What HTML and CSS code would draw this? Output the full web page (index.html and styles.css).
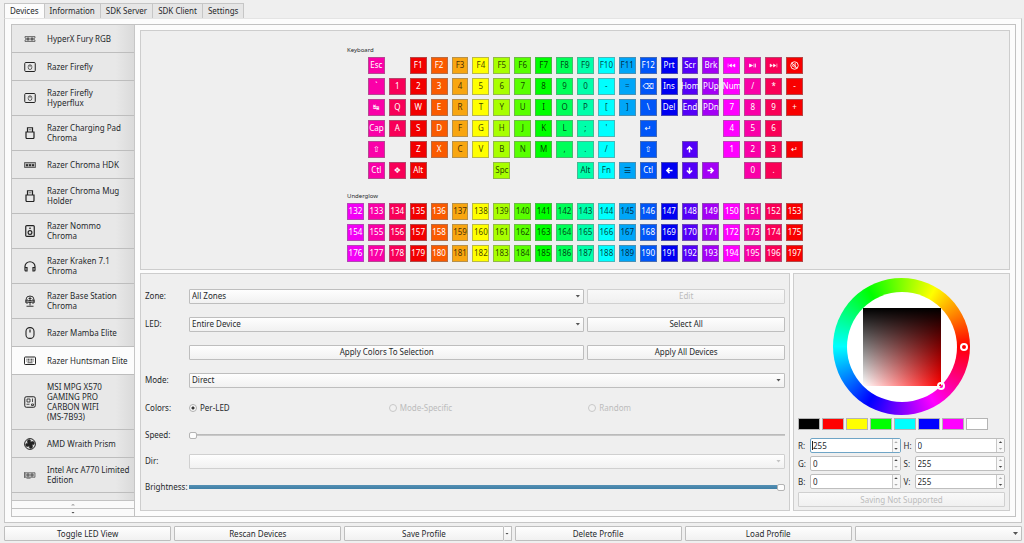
FILE: index.html
```html
<!DOCTYPE html>
<html lang="en">
<head>
<meta charset="utf-8">
<title>OpenRGB</title>
<link rel="stylesheet" href="styles.css">
</head>
<body>
<svg class="symbols" aria-hidden="true">
  <symbol id="i-dram" viewBox="0 0 24 24"><path d="M2 7h20v3a2 2 0 0 0 0 4v3H2v-3a2 2 0 0 0 0-4z" fill="#ccc" stroke="#555"/><path d="M6 10h4v4H6zM14 10h4v4h-4z" fill="#888" stroke="#444"/></symbol>
  <symbol id="i-mat" viewBox="0 0 24 24"><rect x="1.500" y="3" width="21" height="18" rx="2" stroke-width="2"/><rect x="8.500" y="7.500" width="7" height="9.500" rx="3.500" stroke-width="1.300"/><path d="M12 8v4" stroke-width="1.300"/></symbol>
  <symbol id="i-usb" viewBox="0 0 24 24"><path d="M4 10h16v11a2 2 0 0 1-2 2H6a2 2 0 0 1-2-2zM7 10V1.500h10V10" stroke-width="2.400"/><path d="M10.500 4.500v2M13.500 4.500v2" stroke-width="1.500"/></symbol>
  <symbol id="i-strip" viewBox="0 0 24 24"><path d="M1 7h22v10H1z" fill="#aaa" stroke="#444"/><path d="M5 11h2v3H5zM11 11h2v3h-2zM17 11h2v3h-2z" fill="#222"/></symbol>
  <symbol id="i-speaker" viewBox="0 0 24 24"><rect x="3.500" y="1.200" width="17" height="21.600" rx="2" stroke-width="2.400"/><circle cx="12" cy="15" r="3.800" stroke-width="2.400"/><circle cx="12" cy="6.500" r="1" stroke-width="2"/></symbol>
  <symbol id="i-headset" viewBox="0 0 24 24"><path d="M2 17v-4a10 9.500 0 0 1 20 0v4M2 15h4v7H4a2 2 0 0 1-2-2zM18 15h4v5a2 2 0 0 1-2 2h-2z" stroke-width="2.400"/></symbol>
  <symbol id="i-stand" viewBox="0 0 24 24"><path d="M4 15V9a8 7 0 0 1 16 0v6M4 10h4v6H4zM16 10h4v6h-4zM12 3v18M5 22.500h14M9 7h6M9 11h6M9 15h6" stroke-width="1.800"/></symbol>
  <symbol id="i-mouse" viewBox="0 0 24 24"><rect x="4" y="1.200" width="16" height="21.600" rx="7.500" stroke-width="2.200"/><path d="M12 5v6" stroke-width="2.400"/></symbol>
  <symbol id="i-keyboard" viewBox="0 0 24 24"><rect x="1" y="4" width="22" height="15" rx="1.500" stroke-width="2"/><path d="M5 8.500h14M5 12h14" stroke-dasharray="2 1" stroke-width="2"/><path d="M7 15.500h10"/></symbol>
  <symbol id="i-board" viewBox="0 0 24 24"><rect x="1.500" y="1.500" width="21" height="21" rx="3" stroke-width="2"/><path d="M6 6h6v6H6zM17 5v7M5 16.500h6M15 16h4v3h-4z" stroke-width="1.600"/></symbol>
  <symbol id="i-fan" viewBox="0 0 24 24"><circle cx="12" cy="12" r="10.800" stroke-width="2"/><path d="M12 12C5 11 5 4 10 3c5 0 4 5 2 9zM12 12c1-7 8-7 9-2 0 5-5 4-9 2zM12 12c7 1 7 8 2 9-5 0-4-5-2-9zM12 12c-1 7-8 7-9 2 0-5 5-4 9-2z" fill="#222" stroke-width="0.600"/></symbol>
  <symbol id="i-gpu" viewBox="0 0 24 24"><path d="M1 6v12M2 7.500h20v9H2z" fill="#ccc" stroke="#555"/><circle cx="8" cy="12" r="2.500" fill="#999" stroke="#444"/><circle cx="16" cy="12" r="2.500" fill="#999" stroke="#444"/><path d="M5 18.500h8" stroke="#555"/></symbol>
  <symbol id="k-prev" viewBox="0 0 24 24"><path d="M3 7v10M12 8v8l-6-4zM21 8v8l-6-4z" fill="#fff" stroke="#fff"/></symbol>
  <symbol id="k-play" viewBox="0 0 24 24"><path d="M4 8v8l8-4zM16 7v10M20 7v10" fill="#fff" stroke="#fff" stroke-width="2"/></symbol>
  <symbol id="k-next" viewBox="0 0 24 24"><path d="M21 7v10M12 8v8l6-4zM3 8v8l6-4z" fill="#fff" stroke="#fff"/></symbol>
  <symbol id="k-mute" viewBox="0 0 24 24"><circle cx="12" cy="12" r="10" stroke="#fff" stroke-width="2.400"/><path d="M5 5l14 14M7 10v4h3l4 4V6l-4 4z" stroke="#fff" stroke-width="2"/></symbol>
  <symbol id="k-left" viewBox="0 0 24 24"><path d="M20 12H6M12 5l-7 7 7 7" stroke="#fff" stroke-width="4"/></symbol>
  <symbol id="k-right" viewBox="0 0 24 24"><path d="M4 12h14M12 5l7 7-7 7" stroke="#fff" stroke-width="4"/></symbol>
  <symbol id="k-up" viewBox="0 0 24 24"><path d="M12 20V6M5 12l7-7 7 7" stroke="#fff" stroke-width="4"/></symbol>
  <symbol id="k-down" viewBox="0 0 24 24"><path d="M12 4v14M5 12l7 7 7-7" stroke="#fff" stroke-width="4"/></symbol>
</svg>

<nav class="tabs">
  <button class="tab tab-active">Devices</button>
  <button class="tab">Information</button>
  <button class="tab">SDK Server</button>
  <button class="tab">SDK Client</button>
  <button class="tab">Settings</button>
</nav>

<main class="page">
  <div class="frame">
    <aside class="sidebar">
      <div class="devices">
        <button class="device"><svg><use href="#i-dram"/></svg><span>HyperX Fury RGB</span></button>
        <button class="device"><svg><use href="#i-mat"/></svg><span>Razer Firefly</span></button>
        <button class="device"><svg><use href="#i-mat"/></svg><span>Razer Firefly<br>Hyperflux</span></button>
        <button class="device"><svg><use href="#i-usb"/></svg><span>Razer Charging Pad<br>Chroma</span></button>
        <button class="device"><svg><use href="#i-strip"/></svg><span>Razer Chroma HDK</span></button>
        <button class="device"><svg><use href="#i-usb"/></svg><span>Razer Chroma Mug<br>Holder</span></button>
        <button class="device"><svg><use href="#i-speaker"/></svg><span>Razer Nommo<br>Chroma</span></button>
        <button class="device"><svg><use href="#i-headset"/></svg><span>Razer Kraken 7.1<br>Chroma</span></button>
        <button class="device"><svg><use href="#i-stand"/></svg><span>Razer Base Station<br>Chroma</span></button>
        <button class="device"><svg><use href="#i-mouse"/></svg><span>Razer Mamba Elite</span></button>
        <button class="device device-active"><svg><use href="#i-keyboard"/></svg><span>Razer Huntsman Elite</span></button>
        <button class="device"><svg><use href="#i-board"/></svg><span>MSI MPG X570<br>GAMING PRO<br>CARBON WIFI<br>(MS-7B93)</span></button>
        <button class="device"><svg><use href="#i-fan"/></svg><span>AMD Wraith Prism</span></button>
        <button class="device"><svg><use href="#i-gpu"/></svg><span>Intel Arc A770 Limited<br>Edition</span></button>
      </div>
      <button class="scroll" aria-label="Scroll up" disabled><i class="arrow arrow-up"></i></button>
      <button class="scroll" aria-label="Scroll down"><i class="arrow"></i></button>
    </aside>

    <div class="content">
      <section class="panel led-view">
        <div class="zones">
          <h2 class="zone-name">Keyboard</h2>
          <div class="keys" id="keyboard"></div>
          <h2 class="zone-name zone-second">Underglow</h2>
          <div class="keys" id="underglow"></div>
        </div>
      </section>

      <div class="lower">
        <section class="panel settings">
          <div class="row">
            <label for="zone">Zone:</label>
            <div class="combo"><select id="zone"><option>All Zones</option></select></div>
            <button class="button" disabled>Edit</button>
          </div>
          <div class="row">
            <label for="led">LED:</label>
            <div class="combo"><select id="led"><option>Entire Device</option></select></div>
            <button class="button">Select All</button>
          </div>
          <div class="row">
            <span></span>
            <button class="button">Apply Colors To Selection</button>
            <button class="button">Apply All Devices</button>
          </div>
          <div class="row">
            <label for="mode">Mode:</label>
            <div class="combo wide"><select id="mode"><option>Direct</option></select></div>
          </div>
          <div class="row">
            <span>Colors:</span>
            <div class="radios wide">
              <label class="radio"><input type="radio" name="colors" checked>Per-LED</label>
              <label class="radio off"><input type="radio" name="colors" disabled>Mode-Specific</label>
              <label class="radio off"><input type="radio" name="colors" disabled>Random</label>
            </div>
          </div>
          <div class="row row-short">
            <label for="speed">Speed:</label>
            <input class="slider wide" id="speed" type="range" min="0" max="100" value="0" disabled>
          </div>
          <div class="row row-short">
            <label for="dir">Dir:</label>
            <div class="combo combo-off wide"><select id="dir" disabled></select></div>
          </div>
          <div class="row row-short">
            <label for="brightness">Brightness:</label>
            <input class="slider slider-full wide" id="brightness" type="range" min="0" max="100" value="100">
          </div>
        </section>

        <section class="panel picker">
          <div class="wheel">
            <div class="wheel-hole"><div class="square"><i class="handle handle-shade"></i></div></div>
            <i class="handle handle-hue"></i>
          </div>
          <div class="swatches">
            <button class="swatch black" aria-label="Black"></button>
            <button class="swatch red" aria-label="Red"></button>
            <button class="swatch yellow" aria-label="Yellow"></button>
            <button class="swatch green" aria-label="Green"></button>
            <button class="swatch cyan" aria-label="Cyan"></button>
            <button class="swatch blue" aria-label="Blue"></button>
            <button class="swatch magenta" aria-label="Magenta"></button>
            <button class="swatch white" aria-label="White"></button>
          </div>
          <div class="channels">
            <label for="r">R:</label>
            <div class="spin spin-focus"><input id="r" value="255"><span class="steps"><button class="dim" aria-label="Increase R"><i class="arrow arrow-up"></i></button><button aria-label="Decrease R"><i class="arrow"></i></button></span></div>
            <label for="h">H:</label>
            <div class="spin"><input id="h" value="0"><span class="steps"><button aria-label="Increase H"><i class="arrow arrow-up"></i></button><button class="dim" aria-label="Decrease H"><i class="arrow"></i></button></span></div>
            <label for="g">G:</label>
            <div class="spin"><input id="g" value="0"><span class="steps"><button aria-label="Increase G"><i class="arrow arrow-up"></i></button><button class="dim" aria-label="Decrease G"><i class="arrow"></i></button></span></div>
            <label for="s">S:</label>
            <div class="spin"><input id="s" value="255"><span class="steps"><button class="dim" aria-label="Increase S"><i class="arrow arrow-up"></i></button><button aria-label="Decrease S"><i class="arrow"></i></button></span></div>
            <label for="b">B:</label>
            <div class="spin"><input id="b" value="0"><span class="steps"><button aria-label="Increase B"><i class="arrow arrow-up"></i></button><button class="dim" aria-label="Decrease B"><i class="arrow"></i></button></span></div>
            <label for="v">V:</label>
            <div class="spin"><input id="v" value="255"><span class="steps"><button class="dim" aria-label="Increase V"><i class="arrow arrow-up"></i></button><button aria-label="Decrease V"><i class="arrow"></i></button></span></div>
          </div>
          <button class="button save" disabled>Saving Not Supported</button>
        </section>
      </div>
    </div>
  </div>
</main>

<footer class="actions">
  <button class="button">Toggle LED View</button>
  <button class="button">Rescan Devices</button>
  <div class="split">
    <button class="button">Save Profile</button>
    <button class="button split-menu" aria-label="Save options"><i class="arrow"></i></button>
  </div>
  <button class="button">Delete Profile</button>
  <button class="button">Load Profile</button>
  <div class="combo"><select aria-label="Profile"></select></div>
</footer>
<script src="keys.js"></script>
</body>
</html>
```

FILE: styles.css
```css
* { box-sizing: border-box; }

body {
  margin: 0;
  padding: 3px 2px 2px 4px;
  min-height: 100vh;
  display: flex;
  flex-direction: column;
  background: #efefef;
  color: #26292c;
  font: 8px/10px "Noto Sans", "DejaVu Sans", sans-serif;
}

button, input, select {
  margin: 0;
  padding: 0;
  color: inherit;
  font: inherit;
}

.symbols { position: absolute; width: 0; height: 0; }

svg { fill: none; stroke: #222; stroke-width: 1.5; }

.arrow {
  display: block;
  width: 4px;
  height: 2px;
  background: #444;
  clip-path: polygon(0 0, 100% 0, 50% 100%);
}
.arrow-up { clip-path: polygon(50% 0, 100% 100%, 0 100%); }
:disabled > .arrow, .dim > .arrow { background: #aaa; }

/* Tabs */
.tabs { display: flex; align-items: flex-end; }
.tab {
  height: 15px;
  padding: 0 5px;
  border: 1px solid #c6c6c6;
  border-left-width: 0;
  border-bottom: 0;
  background: #e6e6e6;
}
.tab-active { border-left-width: 1px; background: #fcfcfc; }

.page {
  flex: 1;
  display: flex;
  padding: 5px 5px 5px 6px;
  border: 1px solid #c6c6c6;
  border-top-color: #e4e4e4;
  background: #fcfcfc;
}
.frame { flex: 1; display: flex; border: 1px solid #c2c2c2; min-width: 0; }

/* Device list */
.sidebar {
  width: 123px;
  display: flex;
  flex-direction: column;
  flex: none;
}
.devices {
  flex: 1 1 0;
  display: flex;
  flex-direction: column;
  min-height: 0;
  overflow: hidden;
  border-right: 1px solid #c6c6c6;
  background: linear-gradient(to right, #e8e8e8 85%, #dadada);
}
.device {
  min-height: 28px;
  flex: none;
  display: flex;
  align-items: center;
  gap: 11px;
  padding: 7px 0 7px 12px;
  border: 0;
  border-bottom: 1px solid #bdbdbd;
  background: none;
  text-align: left;
  white-space: nowrap;
}
.device svg { width: 12px; height: 12px; flex: none; }
.device-active { background: #fcfcfc; }
.scroll {
  height: 8px;
  display: grid;
  place-items: center;
  border: 0;
  border-top: 1px solid #c2c2c2;
  border-right: 1px solid #c2c2c2;
  background: #fafafa;
}

/* Content */
.content {
  flex: 1;
  min-width: 0;
  display: flex;
  flex-direction: column;
  gap: 3px;
  padding: 5px;
}
.panel { border: 1px solid #cdcdcd; background: #efefef; }
.led-view { flex: 1; display: grid; place-items: center; padding-top: 6px; }
.zones { width: 456px; max-width: 100%; }
.zone-name { margin: 0; font-size: 6px; line-height: 10px; font-weight: 400; padding-bottom: 2px; }
.zone-second { padding-top: 12px; padding-bottom: 2px; }
.keys {
  display: grid;
  grid-template-columns: repeat(22, minmax(0, 1fr));
  grid-auto-rows: 17px;
  gap: 4px;
}
.key {
  display: flex;
  align-items: center;
  justify-content: center;
  border: 1px solid rgba(128, 128, 128, 0.55);
  color: #fff;
  white-space: nowrap;
}
.key-dark { color: rgba(0, 0, 0, 0.75); }
.key svg { width: 9px; height: 9px; flex: none; }

.lower { display: flex; gap: 3px; }
.settings { flex: 1; min-width: 0; padding: 8px 4px; }
.row {
  min-height: 28px;
  display: grid;
  grid-template-columns: 41px minmax(0, 2fr) minmax(0, 1fr);
  column-gap: 3px;
  align-items: center;
}
.row-short { min-height: 26px; }
.wide { grid-column: 2 / 4; }

.button {
  height: 15px;
  border: 1px solid #bebebe;
  border-radius: 1px;
  background: linear-gradient(#fefefe, #f1f1f1);
}
.button:disabled { border-color: #d0d0d0; background: linear-gradient(#f9f9f9, #f0f0f0); color: #bcbcbc; }

.combo { position: relative; }
.combo select {
  display: block;
  width: 100%;
  height: 15px;
  padding: 0 12px 0 2px;
  appearance: none;
  border: 1px solid #bebebe;
  border-radius: 1px;
  background: linear-gradient(#fefefe, #f1f1f1);
  opacity: 1;
}
.combo::after {
  content: "";
  position: absolute;
  right: 4px;
  top: 6px;
  width: 5px;
  height: 3px;
  background: #555;
  clip-path: polygon(0 0, 100% 0, 50% 100%);
}
.combo-off select { border-color: #d0d0d0; }
.combo-off::after { background: #c4c4c4; }

.radios { display: grid; grid-template-columns: repeat(3, 1fr); column-gap: 3px; }
.radio { display: flex; align-items: center; gap: 3px; }
.radio input {
  width: 8px;
  height: 8px;
  appearance: none;
  border: 1px solid #b0b0b0;
  border-radius: 50%;
  background: #fafafa;
}
.radio input:checked { background: radial-gradient(circle, #333 0 1px, #fafafa 2px); }
.off { color: #bcbcbc; }
.off input { border-color: #c8c8c8; background: #f1f1f1; }

.slider {
  width: 100%;
  height: 8px;
  appearance: none;
  background: linear-gradient(#b4b4b4, #cfcfcf) center / 100% 2px no-repeat;
}
.slider-full { background: linear-gradient(#5590b4, #3f7fa6) center / 100% 4px no-repeat; }
.slider::-webkit-slider-thumb {
  width: 8px;
  height: 7px;
  appearance: none;
  border: 1px solid #b4b4b4;
  border-radius: 2px;
  background: #fdfdfd;
}

/* Color picker */
.picker { width: 217px; flex: none; display: flex; flex-direction: column; padding: 4px 4px 3px; }
.wheel {
  position: relative;
  width: 137px;
  height: 137px;
  align-self: center;
  display: grid;
  place-items: center;
  border-radius: 50%;
  background: conic-gradient(from 90deg, #f00, #f0f, #00f, #0ff, #0f0, #ff0, #f00);
}
.wheel-hole {
  width: 110px;
  height: 110px;
  display: grid;
  place-items: center;
  border-radius: 50%;
  background: #fff;
}
.square {
  position: relative;
  width: 78px;
  height: 78px;
  background: linear-gradient(#000, transparent), linear-gradient(to right, #fff, #f00);
}
.handle { position: absolute; width: 8px; height: 8px; border: 2px solid #fff; border-radius: 50%; }
.handle-hue { right: 2px; top: 65px; }
.handle-shade { right: -4px; bottom: -4px; }

.swatches { display: flex; gap: 2px; padding-top: 3px; }
.swatch { width: 22px; height: 12px; border: 1px solid #b4b4b4; }
.black { background: #000; }
.red { background: #f00; }
.yellow { background: #ff0; }
.green { background: #0f0; }
.cyan { background: #0ff; }
.blue { background: #00f; }
.magenta { background: #f0f; }
.white { background: #fff; }

.channels {
  display: grid;
  grid-template-columns: 9px minmax(0, 1fr) 8px minmax(0, 1fr);
  gap: 3px;
  align-items: center;
  padding: 8px 0 3px;
}
.spin {
  position: relative;
  height: 15px;
  display: flex;
  border: 1px solid #bebebe;
  border-radius: 2px;
  background: #fff;
}
.spin input { flex: 1; min-width: 0; border: 0; padding: 0 2px; background: none; outline: 0; }
.spin-focus { border-color: #6fa5c6; }
.spin-focus::before { content: ""; position: absolute; left: 1px; top: 2px; width: 1px; height: 9px; background: #222; }
.steps { width: 8px; display: flex; flex-direction: column; border-left: 1px solid #c8c8c8; }
.steps button { flex: 1; display: grid; place-items: center; border: 0; background: #f8f8f8; }

/* Bottom bar */
.actions {
  display: grid;
  grid-template-columns: repeat(6, minmax(0, 1fr));
  gap: 3px;
  padding-top: 3px;
}
.split { display: flex; }
.split .button { flex: 1; }
.split .split-menu { flex: 0 0 8px; display: grid; place-items: center; border-left: 0; }
```

FILE: keys.js
```js
const columnColors = [
  "#f200f6", "#fa00a8", "#f80058", "#f20000", "#fa5a00", "#f8a610", "#ffff00", "#a8ff00",
  "#58ff00", "#00ff00", "#00ff58", "#00ffaa", "#00ffff", "#00a6f8", "#0056f8", "#0000f2",
  "#5400f8", "#a400f6", "#ff00ff", "#fa00a8", "#fa0056", "#f80000"
];

const keyboardRows = [
  "_ Esc _ F1 F2 F3 F4 F5 F6 F7 F8 F9 F10 F11 F12 Prt Scr Brk @prev @play @next @mute",
  "_ ` 1 2 3 4 5 6 7 8 9 0 - = ⌫ Ins Hom PUp Num / * -",
  "_ ↹ Q W E R T Y U I O P [ ] \\ Del End PDn 7 8 9 +",
  "_ Cap A S D F G H J K L ; ' _ ↵ _ _ _ 4 5 6 _",
  "_ ⇧ _ Z X C V B N M , . / _ ⇧ _ @up _ 1 2 3 ↵",
  "_ Ctl ❖ Alt _ _ _ Spc _ _ _ Alt Fn ☰ Ctl @left @down @right _ 0 . _"
];

function addKey(parent, label, column) {
  if (label === "_") {
    parent.append(document.createElement("span"));
    return;
  }
  const key = document.createElement("div");
  key.className = column >= 5 && column <= 13 ? "key key-dark" : "key";
  key.style.background = columnColors[column];
  if (label[0] === "@") {
    key.innerHTML = `<svg><use href="#k-${label.slice(1)}"/></svg>`;
  } else {
    key.textContent = label;
  }
  parent.append(key);
}

const keyboard = document.getElementById("keyboard");
keyboardRows.forEach(row => row.split(" ").forEach((label, column) => addKey(keyboard, label, column)));

const underglow = document.getElementById("underglow");
for (let led = 132; led <= 197; led++) addKey(underglow, String(led), (led - 132) % 22);
```
